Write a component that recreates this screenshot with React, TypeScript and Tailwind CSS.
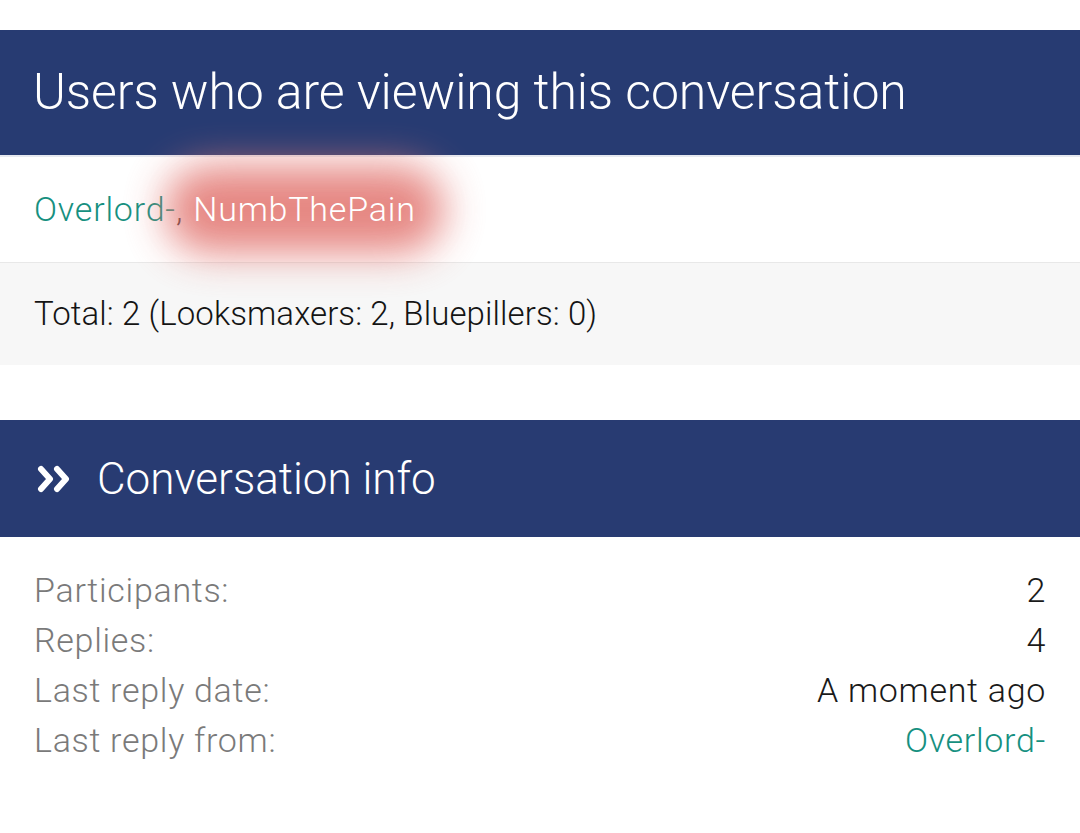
import React from "react";

const font = { fontFamily: "Roboto, 'Noto Sans', sans-serif" };

export default function App() {
  const rows: { label: string; value: string; link?: boolean }[] = [
    { label: "Participants:", value: "2" },
    { label: "Replies:", value: "4" },
    { label: "Last reply date:", value: "A moment ago" },
    { label: "Last reply from:", value: "Overlord-", link: true },
  ];

  return (
    <div className="w-[1080px] h-[833px] bg-white pt-[30px] font-light" style={font}>
      {/* Users viewing */}
      <section>
        <h2 className="h-[127px] bg-[#273b72] text-white text-[50px] tracking-[-0.1px] font-light flex items-center px-[33px] border-b-2 border-[#e6e9f0]">
          Users who are viewing this conversation
        </h2>
        <div className="h-[106px] flex items-center px-[34px] text-[34px] tracking-[0.8px] border-b border-[#e8e8e8]">
          <span className="text-[#16907f]">Overlord-</span>
          <span className="text-[#222] mr-[10px]">,</span>
          <span className="relative text-white">
            <span className="absolute -inset-x-[28px] -inset-y-[18px] rounded-full bg-[#e37a75] opacity-90 blur-[20px]" />
            <span className="relative">NumbThePain</span>
          </span>
        </div>
        <div className="h-[102px] bg-[#f7f7f7] flex items-center px-[34px] text-[33px] tracking-[0.1px] text-[#141414]">
          Total: 2 (Looksmaxers: 2, Bluepillers: 0)
        </div>
      </section>

      {/* Conversation info */}
      <section className="mt-[55px]">
        <h2 className="h-[117px] bg-[#283b72] text-white text-[44px] font-light flex items-center gap-[24px] px-[37px]">
          <svg width="36" height="28" viewBox="0 0 36 28" fill="none" stroke="white" strokeWidth="6" strokeLinecap="round" strokeLinejoin="round">
            <path d="M4 4 L13 14 L4 24" />
            <path d="M20 4 L29 14 L20 24" />
          </svg>
          <span>Conversation info</span>
        </h2>
        <dl className="px-[34px] pt-[28px] text-[34px] tracking-[0.7px]">
          {rows.map((r) => (
            <div key={r.label} className="flex justify-between h-[50px] items-center">
              <dt className="text-[#7a7a7a]">{r.label}</dt>
              <dd className={r.link ? "text-[#16907f]" : "text-[#1a1a1a]"}>{r.value}</dd>
            </div>
          ))}
        </dl>
      </section>
    </div>
  );
}
